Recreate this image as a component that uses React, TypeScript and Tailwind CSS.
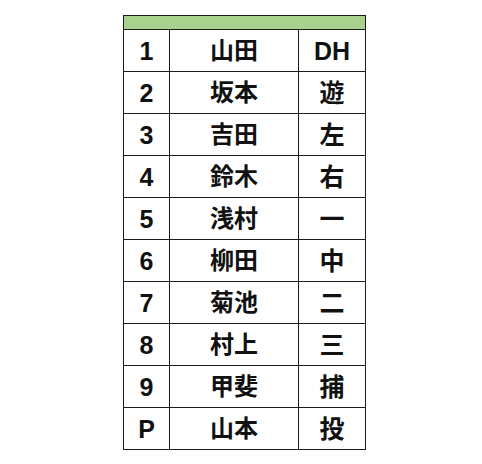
const rows = [
  ["1", "山田", "DH"],
  ["2", "坂本", "遊"],
  ["3", "吉田", "左"],
  ["4", "鈴木", "右"],
  ["5", "浅村", "一"],
  ["6", "柳田", "中"],
  ["7", "菊池", "二"],
  ["8", "村上", "三"],
  ["9", "甲斐", "捕"],
  ["P", "山本", "投"],
];

export default function App() {
  return (
    <div
      className="w-[482px] h-[464px] bg-white pt-[15px] pl-[123px]"
      style={{ fontFamily: '"Liberation Sans", "Noto Sans CJK JP", sans-serif' }}
    >
      <div className="w-[243px] border border-[#1a1a1a]">
        <div className="h-[13px] bg-[#a9d18e]" />
        {rows.map(([num, name, pos]) => (
          <div
            key={num}
            className="flex h-[42px] border-t border-[#1a1a1a] text-[25px] font-bold leading-none text-[#111]"
          >
            <div className="flex w-[46px] items-center justify-center border-r border-[#1a1a1a] pt-[1px]">
              {num}
            </div>
            <div className="flex w-[129px] items-center justify-center border-r border-[#1a1a1a] text-[24px]">
              {name}
            </div>
            <div className="flex flex-1 items-center justify-center pt-[1px]">{pos}</div>
          </div>
        ))}
      </div>
    </div>
  );
}
